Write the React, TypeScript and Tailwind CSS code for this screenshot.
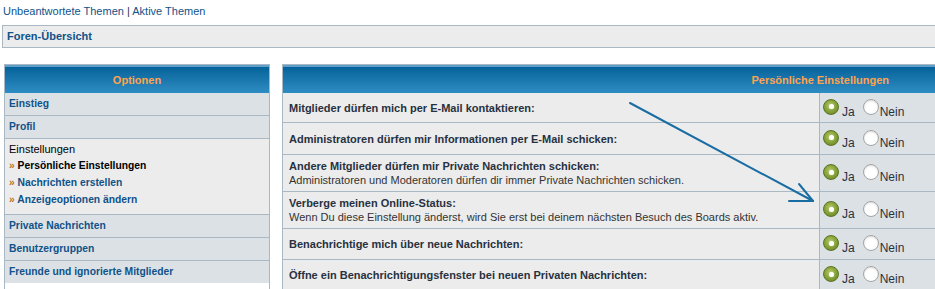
import React from 'react'

const font = { fontFamily: '"Liberation Sans", Arial, Helvetica, sans-serif' }

const Radio = ({ checked }: { checked: boolean }) =>
  checked ? (
    <span className="flex h-[16px] w-[16px] shrink-0 items-center justify-center rounded-full border border-[#5b7322] bg-[radial-gradient(circle_at_45%_40%,#b9cc70_0%,#8aa63c_45%,#627d22_100%)]">
      <span className="h-[5px] w-[5px] rounded-full bg-white shadow-[0_0_1px_#dfe8c0]"></span>
    </span>
  ) : (
    <span className="block h-[16px] w-[16px] shrink-0 rounded-full border border-[#a4a4a4] bg-white shadow-[inset_0_1px_2px_rgba(0,0,0,0.15)]"></span>
  )

const YesNo = () => (
  <div className="flex items-start pt-[1px] text-[12px] leading-[12px] text-[#28313f]">
    <Radio checked />
    <span className="ml-[3px] mt-[7px]">Ja</span>
    <span className="ml-[8px] block">
      <Radio checked={false} />
    </span>
    <span className="ml-[1px] mt-[7px]">Nein</span>
  </div>
)

const rows = [
  { title: 'Mitglieder dürfen mich per E-Mail kontaktieren:', h: 'h-[30px]' },
  { title: 'Administratoren dürfen mir Informationen per E-Mail schicken:', h: 'h-[32px]' },
  {
    title: 'Andere Mitglieder dürfen mir Private Nachrichten schicken:',
    desc: 'Administratoren und Moderatoren dürfen dir immer Private Nachrichten schicken.',
    h: 'h-[37px]',
  },
  {
    title: 'Verberge meinen Online-Status:',
    desc: 'Wenn Du diese Einstellung änderst, wird Sie erst bei deinem nächsten Besuch des Boards aktiv.',
    h: 'h-[37px]',
  },
  { title: 'Benachrichtige mich über neue Nachrichten:', h: 'h-[31px]' },
  { title: 'Öffne ein Benachrichtigungsfenster bei neuen Privaten Nachrichten:', h: 'h-[31px]' },
]

const Header = ({ children, right }: { children: React.ReactNode; right?: boolean }) => (
  <div
    className={`flex h-[28px] items-center border-t-2 border-[#5f9fca] bg-linear-to-b from-[#04639a] to-[#2d8dc3] text-[11px] font-bold text-[#ffa34f] ${
      right ? 'justify-end pr-[92px]' : 'justify-center'
    }`}
  >
    {children}
  </div>
)

const MenuRow = ({ children, h = 'h-[23px]', last }: { children: React.ReactNode; h?: string; last?: boolean }) => (
  <div
    className={`flex ${h} items-center bg-[#dce1e5] pl-[4px] text-[10.3px] font-bold text-[#105289] ${
      last ? '' : 'border-b border-[#a9b8c2]'
    }`}
  >
    {children}
  </div>
)

export default function App() {
  return (
    <div className="relative h-[289px] w-[935px] overflow-hidden bg-white" style={font}>
      <div className="h-[25px] pl-[3px] pt-[4px] text-[11px] leading-[14px] text-[#105289]">
        Unbeantwortete Themen <span className="text-[#333]">|</span> Aktive Themen
      </div>

      <div className="ml-[2px] flex h-[23px] w-[960px] items-center border border-[#a9b8c2] bg-[#ececec] pl-[4px] text-[11px] font-bold text-[#105289]">
        Foren-Übersicht
      </div>

      <div className="mt-[16px] flex gap-[12px] pl-[4px]">
        {/* Optionen */}
        <div className="w-[266px] shrink-0 border border-[#a9b8c2]">
          <Header>Optionen</Header>
          <MenuRow>Einstieg</MenuRow>
          <MenuRow>Profil</MenuRow>
          <div className="h-[76px] border-b border-[#a9b8c2] bg-[#ececec] pl-[4px] pt-[3px] text-[10.3px]">
            <div className="text-[11px] leading-[15px] text-black">Einstellungen</div>
            <div className="font-bold leading-[17px] text-black">
              <span className="text-[#b8752a]">»</span> Persönliche Einstellungen
            </div>
            <div className="font-bold leading-[17px] text-[#105289]">
              <span className="text-[#b8752a]">»</span> Nachrichten erstellen
            </div>
            <div className="font-bold leading-[17px] text-[#105289]">
              <span className="text-[#b8752a]">»</span> Anzeigeoptionen ändern
            </div>
          </div>
          <MenuRow>Private Nachrichten</MenuRow>
          <MenuRow>Benutzergruppen</MenuRow>
          <MenuRow h="h-[22px]" last>
            Freunde und ignorierte Mitglieder
          </MenuRow>
        </div>

        {/* Persönliche Einstellungen */}
        <div className="w-[700px] shrink-0 border border-[#a9b8c2]">
          <Header right>Persönliche Einstellungen</Header>
          {rows.map((r) => (
            <div key={r.title} className={`flex ${r.h} border-b border-[#a9b8c2]`}>
              <div className="flex w-[536px] flex-col justify-center bg-[#ececec] pl-[6px] text-[11px] leading-[14px] text-[#28313f]">
                <div className="font-bold">{r.title}</div>
                {r.desc && <div className="text-[#333]">{r.desc}</div>}
              </div>
              <div className="flex flex-1 items-center border-l border-[#a9b8c2] bg-[#dce1e5] pl-[3px]">
                <YesNo />
              </div>
            </div>
          ))}
        </div>
      </div>

      {/* Pfeil */}
      <svg className="pointer-events-none absolute left-0 top-0" width="935" height="289">
        <g stroke="#1a6da3" strokeWidth="2" fill="none" strokeLinecap="round">
          <line x1="630" y1="103" x2="813" y2="201" />
          <line x1="813" y1="201" x2="799" y2="184" />
          <line x1="813" y1="201" x2="789" y2="201" />
        </g>
      </svg>
    </div>
  )
}
